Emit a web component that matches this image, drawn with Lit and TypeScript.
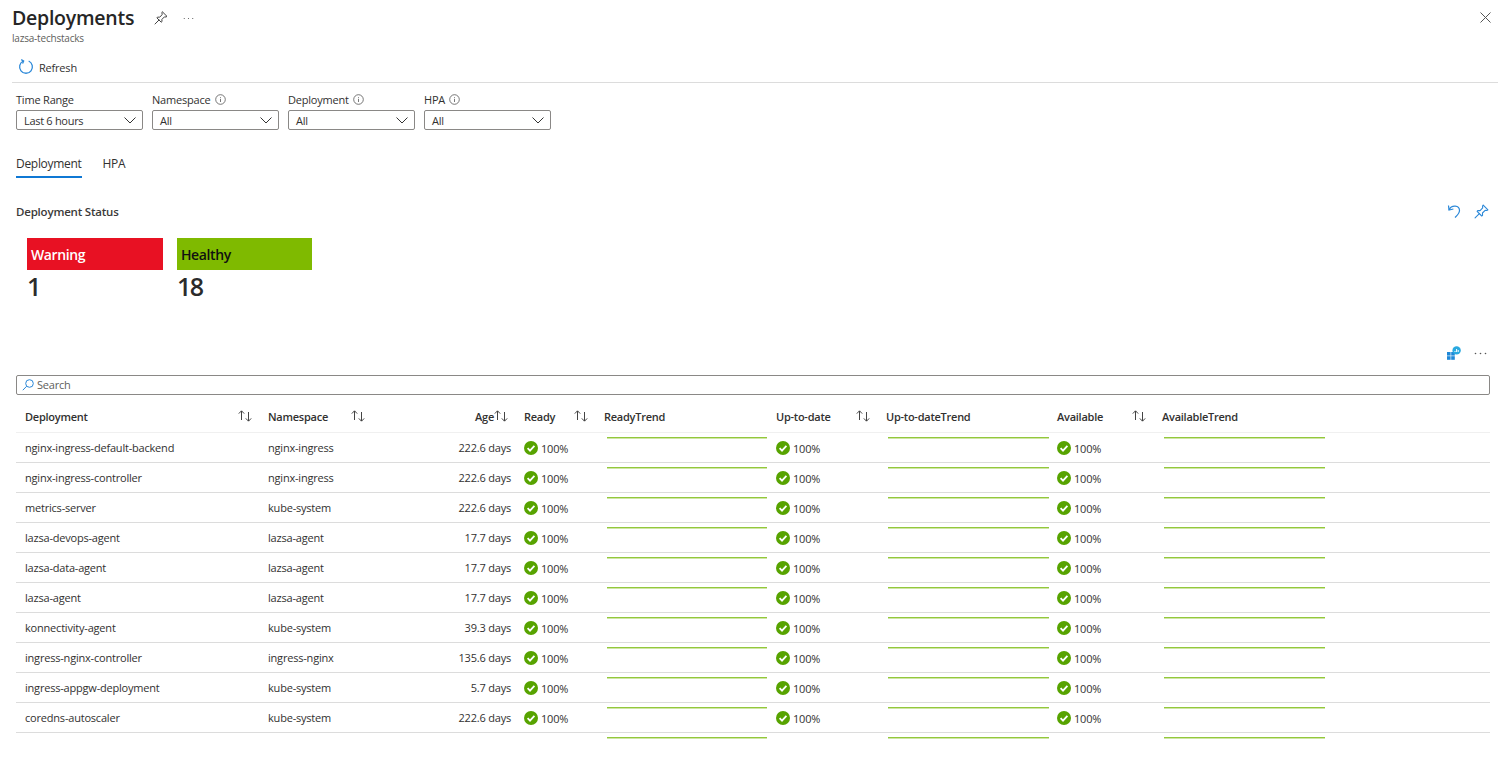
import { LitElement, html, css } from "lit";
import { customElement } from "lit/decorators.js";

const rows = [
  ["nginx-ingress-default-backend", "nginx-ingress", "222.6 days"],
  ["nginx-ingress-controller", "nginx-ingress", "222.6 days"],
  ["metrics-server", "kube-system", "222.6 days"],
  ["lazsa-devops-agent", "lazsa-agent", "17.7 days"],
  ["lazsa-data-agent", "lazsa-agent", "17.7 days"],
  ["lazsa-agent", "lazsa-agent", "17.7 days"],
  ["konnectivity-agent", "kube-system", "39.3 days"],
  ["ingress-nginx-controller", "ingress-nginx", "135.6 days"],
  ["ingress-appgw-deployment", "kube-system", "5.7 days"],
  ["coredns-autoscaler", "kube-system", "222.6 days"],
];

const pin = (color: string, s = 14) => html`<svg width="${s}" height="${s}" viewBox="0 0 14 14" fill="none" stroke="${color}" stroke-width="1" stroke-linejoin="round" stroke-linecap="round"><path d="M8.6 1 L13 5.4 L12 6 L10.4 5.9 L7.9 8.4 L8 10.6 L7.2 11.2 L2.9 6.9 L3.5 6.1 L5.7 6.2 L8.1 3.7 L8 2 Z"/><path d="M5 9 L1 13"/></svg>`;
const chevron = html`<svg class="chev" width="12" height="7" viewBox="0 0 12 7" fill="none" stroke="#333" stroke-width="1"><path d="M.5 .5 L6 6 L11.5 .5"/></svg>`;
const info = html`<svg width="11" height="11" viewBox="0 0 11 11" fill="none" stroke="#555" stroke-width=".8"><circle cx="5.5" cy="5.5" r="4.8"/><path d="M5.5 4.8V8M5.5 3V3.8"/></svg>`;
const sort = html`<svg class="sort" width="14" height="12" viewBox="0 0 14 12" fill="none" stroke="#444" stroke-width="1"><path d="M3.5 10V1M.8 3.6 L3.5 .8 L6.2 3.6"/><path d="M10.5 2V11M7.8 8.4 L10.5 11.2 L13.2 8.4"/></svg>`;
const check = html`<svg width="14" height="14" viewBox="0 0 14 14"><circle cx="7" cy="7" r="7" fill="#57a300"/><path d="M3.6 7.2 L6 9.6 L10.4 4.9" fill="none" stroke="#fff" stroke-width="1.8"/></svg>`;
const dots = (c: string, w = 13, r = .7) => html`<svg width="${w}" height="3" viewBox="0 0 13 3" fill="${c}"><circle cx="1.5" cy="1.5" r="${r}"/><circle cx="6.5" cy="1.5" r="${r}"/><circle cx="11.5" cy="1.5" r="${r}"/></svg>`;

const status = html`<span class="status">${check}<span>100%</span></span>`;
const trend = html`<div class="trend"></div>`;

@customElement("app-root")
export class AppRoot extends LitElement {
  static styles = css`
    :host { display: block; width: 1500px; height: 771px; overflow: hidden; background: #fff; color: #323130;
      font-family: "Open Sans", "Noto Sans", sans-serif; font-size: 11px; letter-spacing: -.2px; }
    * { box-sizing: border-box; }
    svg { display: block; flex: none; }
    .head { height: 83px; margin: 0 2px 0 12px; border-bottom: 1px solid #dcdcdc; display: flex; flex-direction: column; }
    .titlebar { height: 50px; display: flex; justify-content: space-between; }
    .titlewrap { padding-top: 5px; }
    .title-row { display: flex; align-items: center; height: 26px; }
    h1 { margin: 0; font-size: 19.5px; font-weight: 600; line-height: 26px; color: #262626; letter-spacing: -.25px; }
    .pin { margin-left: 20px; }
    .dots { margin-left: 15px; }
    .sub { font-size: 10px; line-height: 14px; color: #605e5c; }
    .close { margin: 12px 7px 0 0; }
    .refresh { display: flex; align-items: center; gap: 5px; padding-left: 6px; height: 22px; margin-top: 6px; font-size: 11px; }
    .filters { display: flex; gap: 9px; margin: 7px 0 0 16px; }
    .filter { width: 127px; }
    .filter label { display: flex; align-items: center; gap: 4px; height: 18px; font-weight: 500; font-size: 11px; color: #323130; }
    .select { margin-top: 2px; height: 20px; border: 1px solid #8a8886; border-radius: 2px; display: flex; align-items: center;
      justify-content: space-between; padding: 0 6px 0 7px; font-size: 11px; letter-spacing: -.3px; }
    .tabs { display: flex; gap: 21px; margin: 20px 0 0 16px; height: 28px; font-size: 12px; letter-spacing: -.3px; }
    .tab { height: 28px; padding-top: 5px; }
    .tab.on { border-bottom: 2px solid #0f78d4; font-weight: 500; }
    .section { display: flex; justify-content: space-between; align-items: center; margin: 22px 11px 0 16px; height: 22px; }
    .section b { font-weight: 600; font-size: 11.5px; letter-spacing: -.2px; color: #3b3a39; }
    .actions { display: flex; gap: 13px; align-items: center; }
    .tiles { display: flex; gap: 14px; margin: 16px 0 0 27px; }
    .tile { width: 136px; }
    .tile + .tile { width: 135px; }
    .tile .bar { height: 32px; display: flex; align-items: center; padding-left: 4px; font-size: 14px; font-weight: 600; letter-spacing: -.4px; }
    .bar.warn { background: #e81123; color: #fff; }
    .bar.ok { background: #7fba00; color: #111; }
    .num { font-size: 25px; font-weight: 600; line-height: 32px; color: #2b2b2b; letter-spacing: -1.5px; }
    .tools { display: flex; justify-content: flex-end; align-items: center; gap: 13px; margin: 41px 13px 0 0; height: 20px; }
    .search { margin: 12px 10px 0 16px; height: 20px; border: 1px solid #8a8886; border-radius: 2px; display: flex; align-items: center;
      gap: 3px; padding-left: 5px; padding-bottom: 1px; color: #605e5c; font-size: 11px; }
    .table { margin: 7px 10px 0 16px; }
    .row { display: grid; grid-template-columns: 243px 113px 143px 80px 172px 110px 171px 105px 172px 1fr; height: 30px; align-items: center; }
    .row.hd { border-bottom: 1px solid #f0f0f0; height: 31px; font-weight: 600; color: #323130; letter-spacing: -.25px; }
    .row.bd { border-bottom: 1px solid #dcdcdc; }
    .cell { padding-left: 9px; white-space: nowrap; position: relative; height: 100%; display: flex; align-items: center; }
    .hd .cell { justify-content: space-between; padding-right: 7px; padding-bottom: 2px; }
    .hd .right { justify-content: flex-end; }
    .age { justify-content: flex-end; padding-right: 4px; }
    .status { display: flex; align-items: center; gap: 3px; padding-top: 1px; }
    .trend { position: absolute; left: 12px; top: 4px; width: 160px; height: 1px; background: #93c83c; box-shadow: 0 1px 0 #cfe6a5; }
    .cell:nth-child(n+7) .trend { left: 11px; width: 161px; }
  `;

  render() {
    return html`
      <div class="head">
        <div class="titlebar">
          <div class="titlewrap">
            <div class="title-row"><h1>Deployments</h1><span class="pin">${pin("#444")}</span><span class="dots">${dots("#555", 11, .7)}</span></div>
            <div class="sub">lazsa-techstacks</div>
          </div>
          <svg class="close" width="11" height="11" viewBox="0 0 11 11" stroke="#555" stroke-width="1"><path d="M.5 .5 L10.5 10.5M10.5 .5 L.5 10.5"/></svg>
        </div>
        <div class="refresh">
          <svg width="16" height="16" viewBox="0 0 15 15" fill="none" stroke="#2b88d8" stroke-width="1.2"><path d="M5 1.9 A6 6 0 1 0 10 1.9"/><path d="M3 .6 L5.3 1.9 L4.3 4.2"/></svg>
          <span>Refresh</span>
        </div>
      </div>
      <div class="filters">
        <div class="filter"><label>Time Range</label><div class="select">Last 6 hours ${chevron}</div></div>
        <div class="filter"><label>Namespace ${info}</label><div class="select">All ${chevron}</div></div>
        <div class="filter"><label>Deployment ${info}</label><div class="select">All ${chevron}</div></div>
        <div class="filter"><label>HPA ${info}</label><div class="select">All ${chevron}</div></div>
      </div>
      <div class="tabs"><div class="tab on">Deployment</div><div class="tab">HPA</div></div>
      <div class="section"><b>Deployment Status</b>
        <div class="actions">
          <svg width="14" height="16" viewBox="0 0 14 16" fill="none" stroke="#2b88d8" stroke-width="1.2"><path d="M1.5 2.5 L2 7 L6.4 6"/><path d="M2 6.8 C4.5 1.5 12.5 2 12.5 7.5 C12.5 10.5 10 12.5 8 14.5"/></svg>
          ${pin("#2b88d8", 15)}
        </div>
      </div>
      <div class="tiles">
        <div class="tile"><div class="bar warn">Warning</div><div class="num">1</div></div>
        <div class="tile"><div class="bar ok">Healthy</div><div class="num">18</div></div>
      </div>
      <div class="tools">
        <svg width="14" height="14" viewBox="0 0 14 14"><rect x="0" y="6" width="3.6" height="3.6" fill="#1e88d8"/><rect x="4.2" y="6" width="3.6" height="3.6" fill="#1e88d8"/><rect x="0" y="10.2" width="3.6" height="3.6" fill="#1e88d8"/><rect x="4.2" y="10.2" width="3.6" height="3.6" fill="#1e88d8"/><circle cx="9.6" cy="4.4" r="4.2" fill="#29a9e0"/><path d="M8 6V5M9.6 6V3M11.2 6V4" stroke="#fff" stroke-width="1"/></svg>
        ${dots("#555", 13, .8)}
      </div>
      <div class="search">
        <svg width="12" height="12" viewBox="0 0 12 12" fill="none" stroke="#2b88d8" stroke-width="1"><circle cx="7.5" cy="4.5" r="3.8"/><path d="M4.7 7.2 L.8 11.2"/></svg>
        <span>Search</span>
      </div>
      <div class="table">
        <div class="row hd">
          <div class="cell">Deployment ${sort}</div>
          <div class="cell">Namespace ${sort}</div>
          <div class="cell right">Age${sort}</div>
          <div class="cell">Ready ${sort}</div>
          <div class="cell"><span>ReadyTrend</span></div>
          <div class="cell">Up-to-date ${sort}</div>
          <div class="cell"><span>Up-to-dateTrend</span></div>
          <div class="cell">Available ${sort}</div>
          <div class="cell"><span>AvailableTrend</span></div>
          <div class="cell"></div>
        </div>
        ${rows.map(r => html`
          <div class="row bd">
            <div class="cell">${r[0]}</div>
            <div class="cell">${r[1]}</div>
            <div class="cell age">${r[2]}</div>
            <div class="cell">${status}</div>
            <div class="cell">${trend}</div>
            <div class="cell">${status}</div>
            <div class="cell">${trend}</div>
            <div class="cell">${status}</div>
            <div class="cell">${trend}</div>
            <div class="cell"></div>
          </div>`)}
        <div class="row">
          <div class="cell"></div><div class="cell"></div><div class="cell"></div><div class="cell"></div>
          <div class="cell">${trend}</div><div class="cell"></div>
          <div class="cell">${trend}</div><div class="cell"></div>
          <div class="cell">${trend}</div><div class="cell"></div>
        </div>
      </div>
    `;
  }
}
